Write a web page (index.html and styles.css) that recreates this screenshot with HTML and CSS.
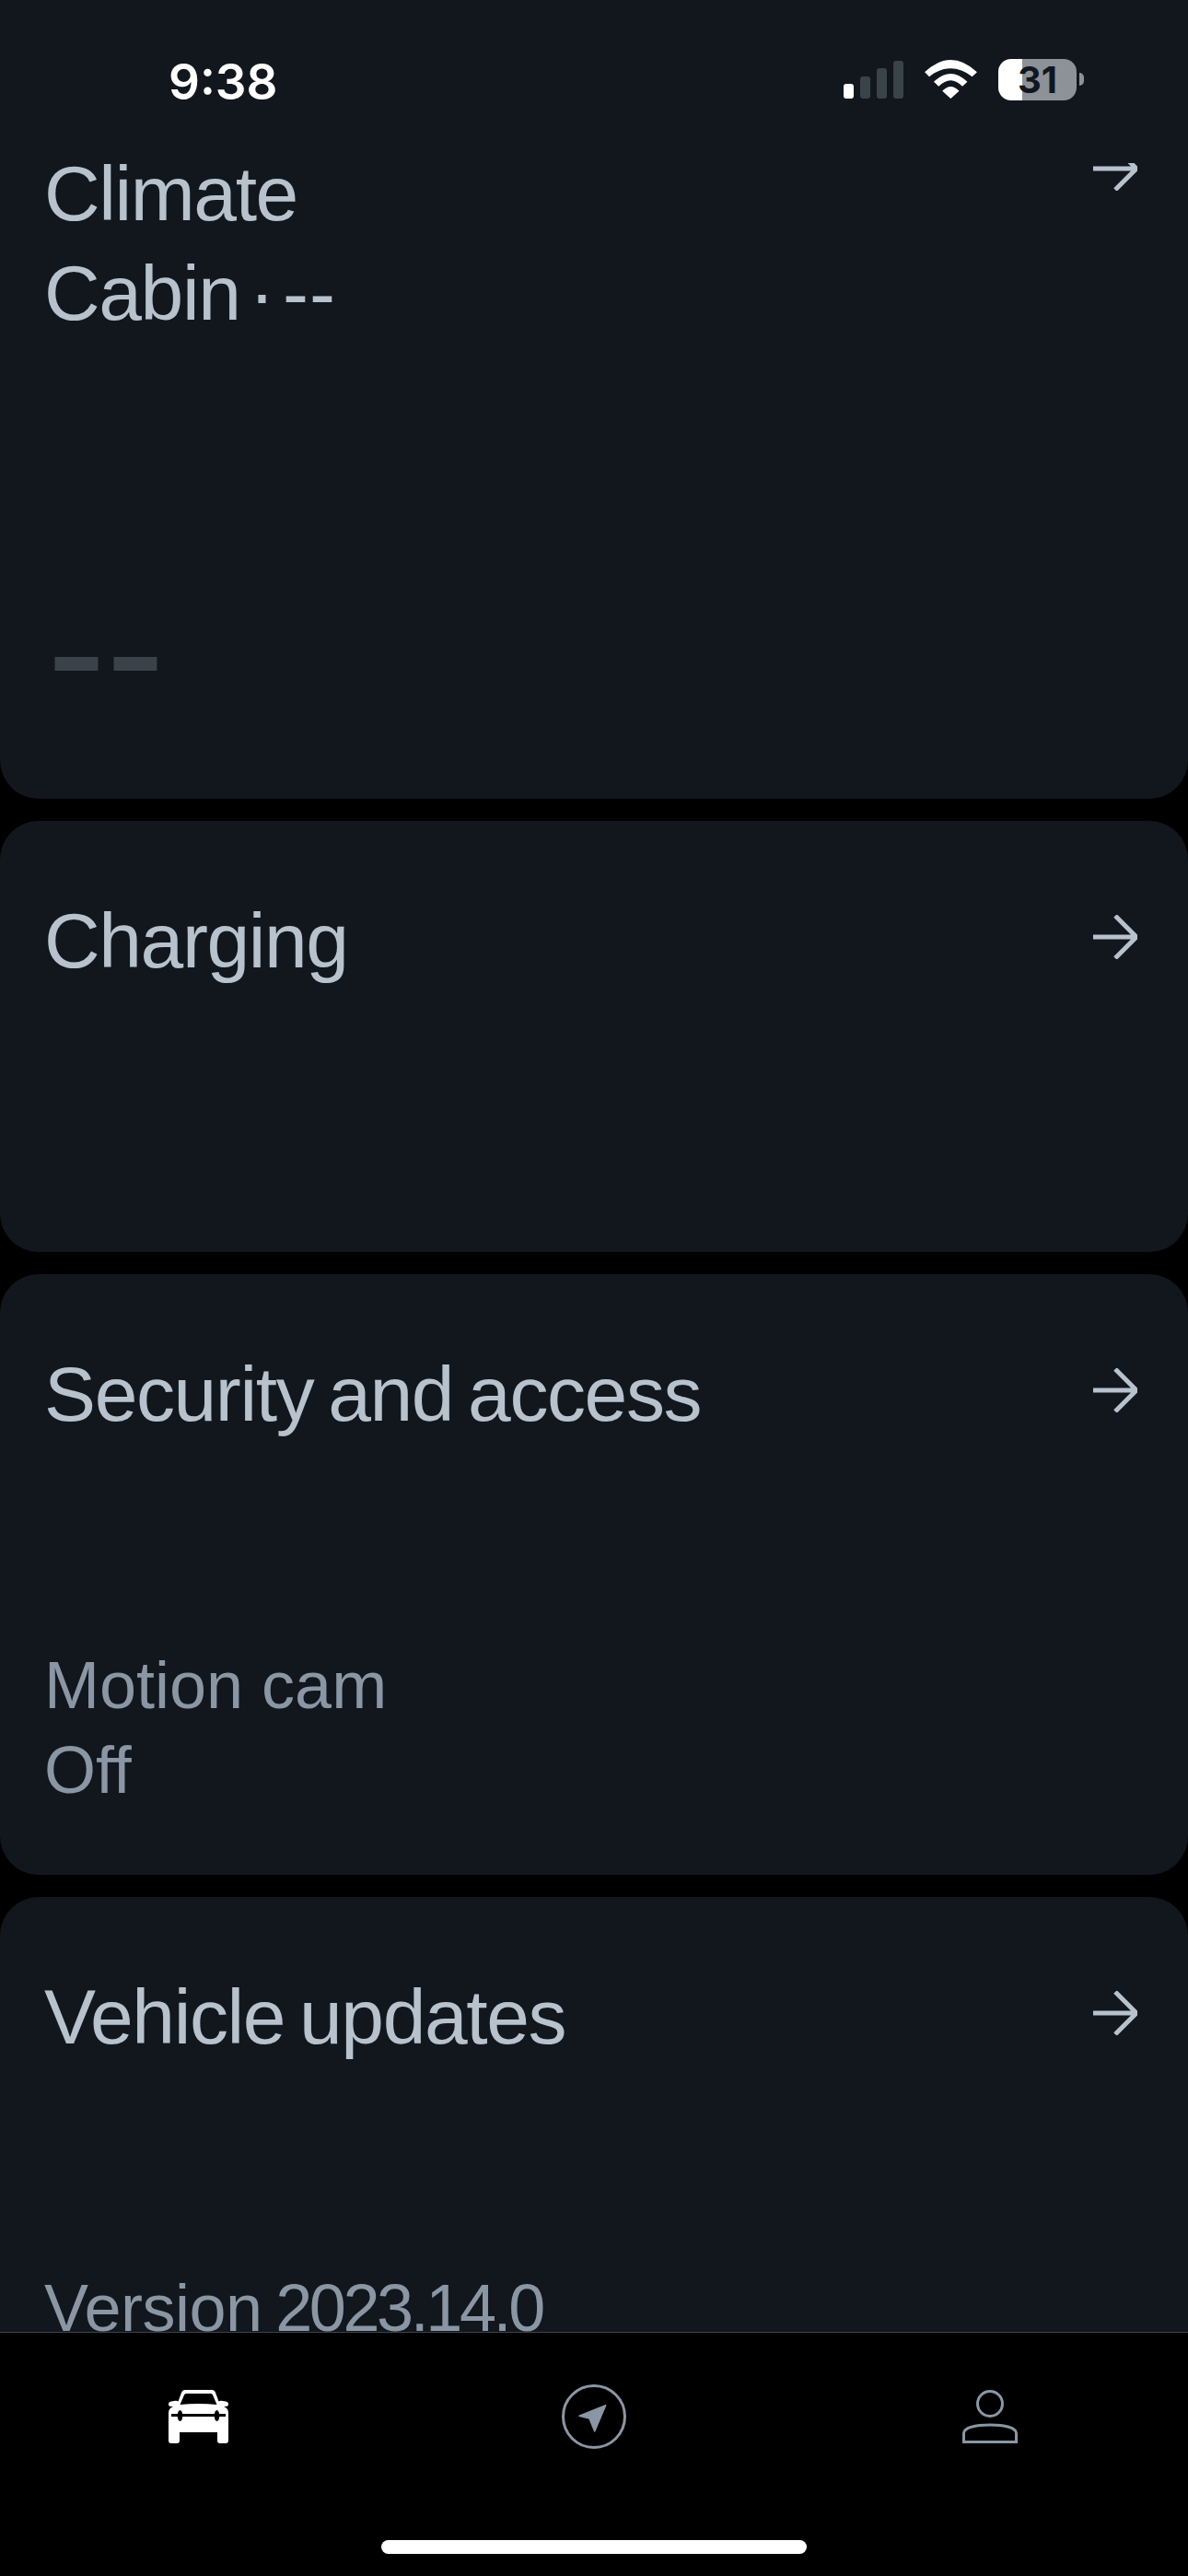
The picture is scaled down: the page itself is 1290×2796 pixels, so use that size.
FILE: index.html
```html
<!DOCTYPE html>
<html lang="en">
<head>
    <meta charset="UTF-8">
    <title>Vehicle</title>
    <link rel="stylesheet" href="styles.css">
</head>
<body>
    <div class="phone">
        <header class="status-bar">
            <span class="time">9:38</span>
            <div class="status-icons">
                <svg class="signal" viewBox="0 0 65 41" width="65" height="41">
                    <rect x="0" y="25" width="11" height="16" rx="3" fill="#fff"/>
                    <rect x="18" y="17" width="11" height="24" rx="3" fill="#3a424a"/>
                    <rect x="36" y="8" width="11" height="33" rx="3" fill="#3a424a"/>
                    <rect x="54" y="0" width="11" height="41" rx="3" fill="#3a424a"/>
                </svg>
                <svg class="wifi" viewBox="0 0 57.3 42.3" width="57" height="42" fill="#fff">
                    <path d="M0 13.3Q28.5 -13.3 57.3 13.3L52 18.3Q28.5 0.3 5 18.3Z"/>
                    <path d="M10 24Q28.5 6 46.7 24L41.3 29Q28.5 15.6 15.3 29Z"/>
                    <path d="M19.3 34Q28.5 24.6 37.7 34L28.5 42.3Z"/>
                </svg>
                <div class="battery">31</div>
            </div>
        </header>

        <main class="cards">
            <section class="card card-climate">
                <div class="card-head">
                    <h2 class="card-title">Climate<br><span class="cabin-line">Cabin · <span class="cabin-temp">--</span></span></h2>
                    <svg class="arrow" viewBox="0 0 48 48" width="48" height="48"><path d="M0 24H46M24 1L47 24L24 47"/></svg>
                </div>
                <div class="temp">--</div>
            </section>

            <section class="card card-charging">
                <div class="card-head">
                    <h2 class="card-title">Charging</h2>
                    <svg class="arrow" viewBox="0 0 48 48" width="48" height="48"><path d="M0 24H46M24 1L47 24L24 47"/></svg>
                </div>
            </section>

            <section class="card">
                <div class="card-head">
                    <h2 class="card-title">Security and access</h2>
                    <svg class="arrow" viewBox="0 0 48 48" width="48" height="48"><path d="M0 24H46M24 1L47 24L24 47"/></svg>
                </div>
                <p class="card-sub">Motion cam<br>Off</p>
            </section>

            <section class="card">
                <div class="card-head">
                    <h2 class="card-title">Vehicle updates</h2>
                    <svg class="arrow" viewBox="0 0 48 48" width="48" height="48"><path d="M0 24H46M24 1L47 24L24 47"/></svg>
                </div>
                <p class="card-sub card-version">Version <span class="version-number">2023.14.0</span></p>
            </section>
        </main>

        <nav class="tab-bar">
            <div class="tabs">
                <div class="tab">
                    <svg viewBox="0 0 65 58" width="65" height="58">
                        <path fill="#fff" fill-rule="evenodd" d="M18 0H47Q50 0 51 3L54.500 12.500Q56 11.500 59 12L62 12.500Q65 13 65 15.500Q65 18 62 18L60 18Q65 20 65 25V55Q65 58 62 58H56Q53 58 53 55V46H12V55Q12 58 9 58H3Q0 58 0 55V25Q0 20 5 18L3 18Q0 18 0 15.500Q0 13 3 12.500L6 12Q9 11.500 10.500 12.500L14 3Q15 0 18 0ZM19 4Q17.500 4 17 5.500L12.500 16Q32.500 14 52.500 16L48 5.500Q47.500 4 46 4Z"/>
                        <rect x="3" y="26" width="59" height="3" fill="#000"/>
                        <ellipse cx="12.500" cy="28" rx="2.800" ry="6" fill="#000"/>
                        <ellipse cx="52.500" cy="28" rx="2.800" ry="6" fill="#000"/>
                    </svg>
                </div>
                <div class="tab">
                    <svg viewBox="0 0 72 72" width="72" height="72">
                        <circle cx="36" cy="36" r="33.500" fill="none" stroke="#8a96a3" stroke-width="3"/>
                        <path d="M48.700 23.700L20 35.300L31 38L36.700 52Z" fill="#8a96a3" stroke="#8a96a3" stroke-width="1.500" stroke-linejoin="round"/>
                    </svg>
                </div>
                <div class="tab">
                    <svg viewBox="0 0 60 58" width="60" height="58" fill="none" stroke="#8a96a3" stroke-width="3">
                        <ellipse cx="30" cy="15" rx="13.500" ry="13.500"/>
                        <path d="M1.500 56.500V47C1.500 41 14 38 30 38S58.500 41 58.500 47V56.500Z"/>
                    </svg>
                </div>
            </div>
            <div class="home-bar"></div>
        </nav>
    </div>
</body>
</html>
```

FILE: styles.css
```css
body {
    margin: 0;
    background: #000;
    font-family: "Liberation Sans", Arial, sans-serif;
}
.phone {
    position: relative;
    width: 1290px;
    height: 2796px;
    display: flex;
    flex-direction: column;
    overflow: hidden;
}

/* status bar sits over the scrolled content */
.status-bar {
    position: absolute;
    top: 0;
    left: 0;
    right: 0;
    height: 177px;
    box-sizing: border-box;
    padding: 64px 113px 0 183px;
    display: flex;
    justify-content: space-between;
    align-items: flex-start;
    background: #12171e;
}
.time {
    margin-top: 3px;
    font-family: Inter, sans-serif;
    font-size: 53px;
    font-weight: 600;
    line-height: 45px;
    color: #fff;
}
.status-icons {
    display: flex;
    align-items: flex-end;
    gap: 23px;
}
.signal, .wifi {
    margin-bottom: 2px;
}
.battery {
    position: relative;
    width: 85px;
    height: 45px;
    margin-right: 8px;
    border-radius: 14px;
    background: linear-gradient(to right, #fff 26px, #8d9198 26px);
    font-family: Inter, sans-serif;
    font-size: 40px;
    font-weight: 700;
    line-height: 45px;
    text-align: center;
    color: #12171e;
}
.battery::after {
    content: "";
    position: absolute;
    left: 88px;
    top: 15px;
    width: 5px;
    height: 14px;
    border-radius: 0 7px 7px 0;
    background: #8d9198;
}

.cards {
    flex: 1;
    min-height: 0;
    overflow: hidden;
    display: flex;
    flex-direction: column;
    gap: 24px;
    padding-top: 57px;
}
.card {
    flex: none;
    box-sizing: border-box;
    min-height: 468px;
    padding: 76px 55px 68px 48px;
    border-radius: 42px;
    background: #12171e;
}
.card-climate {
    height: 810px;
}
.card-head {
    display: flex;
    justify-content: space-between;
    align-items: flex-start;
}
.card-title {
    margin: 0;
    font-size: 84px;
    font-weight: 400;
    line-height: 108px;
    letter-spacing: -1.4px;
    word-spacing: -6px;
    color: #b7c2cd;
}
.card-climate .card-title {
    margin-top: 23px;
}
.cabin-line {
    word-spacing: -12px;
}
.cabin-temp {
    letter-spacing: 1px;
}
.arrow {
    flex: none;
    margin-top: 26px;
    fill: none;
    stroke: #b7c2cd;
    stroke-width: 5;
}
.card-sub {
    margin: 216px 0 0;
    font-size: 72px;
    line-height: 92px;
    color: #8a96a3;
}
.card-version {
    letter-spacing: -0.5px;
    word-spacing: -5px;
}
.version-number {
    letter-spacing: -3.4px;
}
.temp {
    margin: 233px 0 0 3px;
    font-size: 192px;
    line-height: 200px;
    color: #3a424a;
}

.tab-bar {
    flex: none;
    height: 265px;
    box-sizing: border-box;
    border-top: 1px solid #3a424a;
    background: #000;
}
.tabs {
    display: flex;
    height: 184px;
    padding-top: 55px;
    box-sizing: border-box;
}
.tab {
    flex: 1;
    height: 72px;
    display: flex;
    justify-content: center;
    align-items: center;
}
.home-bar {
    width: 462px;
    height: 15px;
    margin: 41px auto 0;
    border-radius: 8px;
    background: #fff;
}
```
